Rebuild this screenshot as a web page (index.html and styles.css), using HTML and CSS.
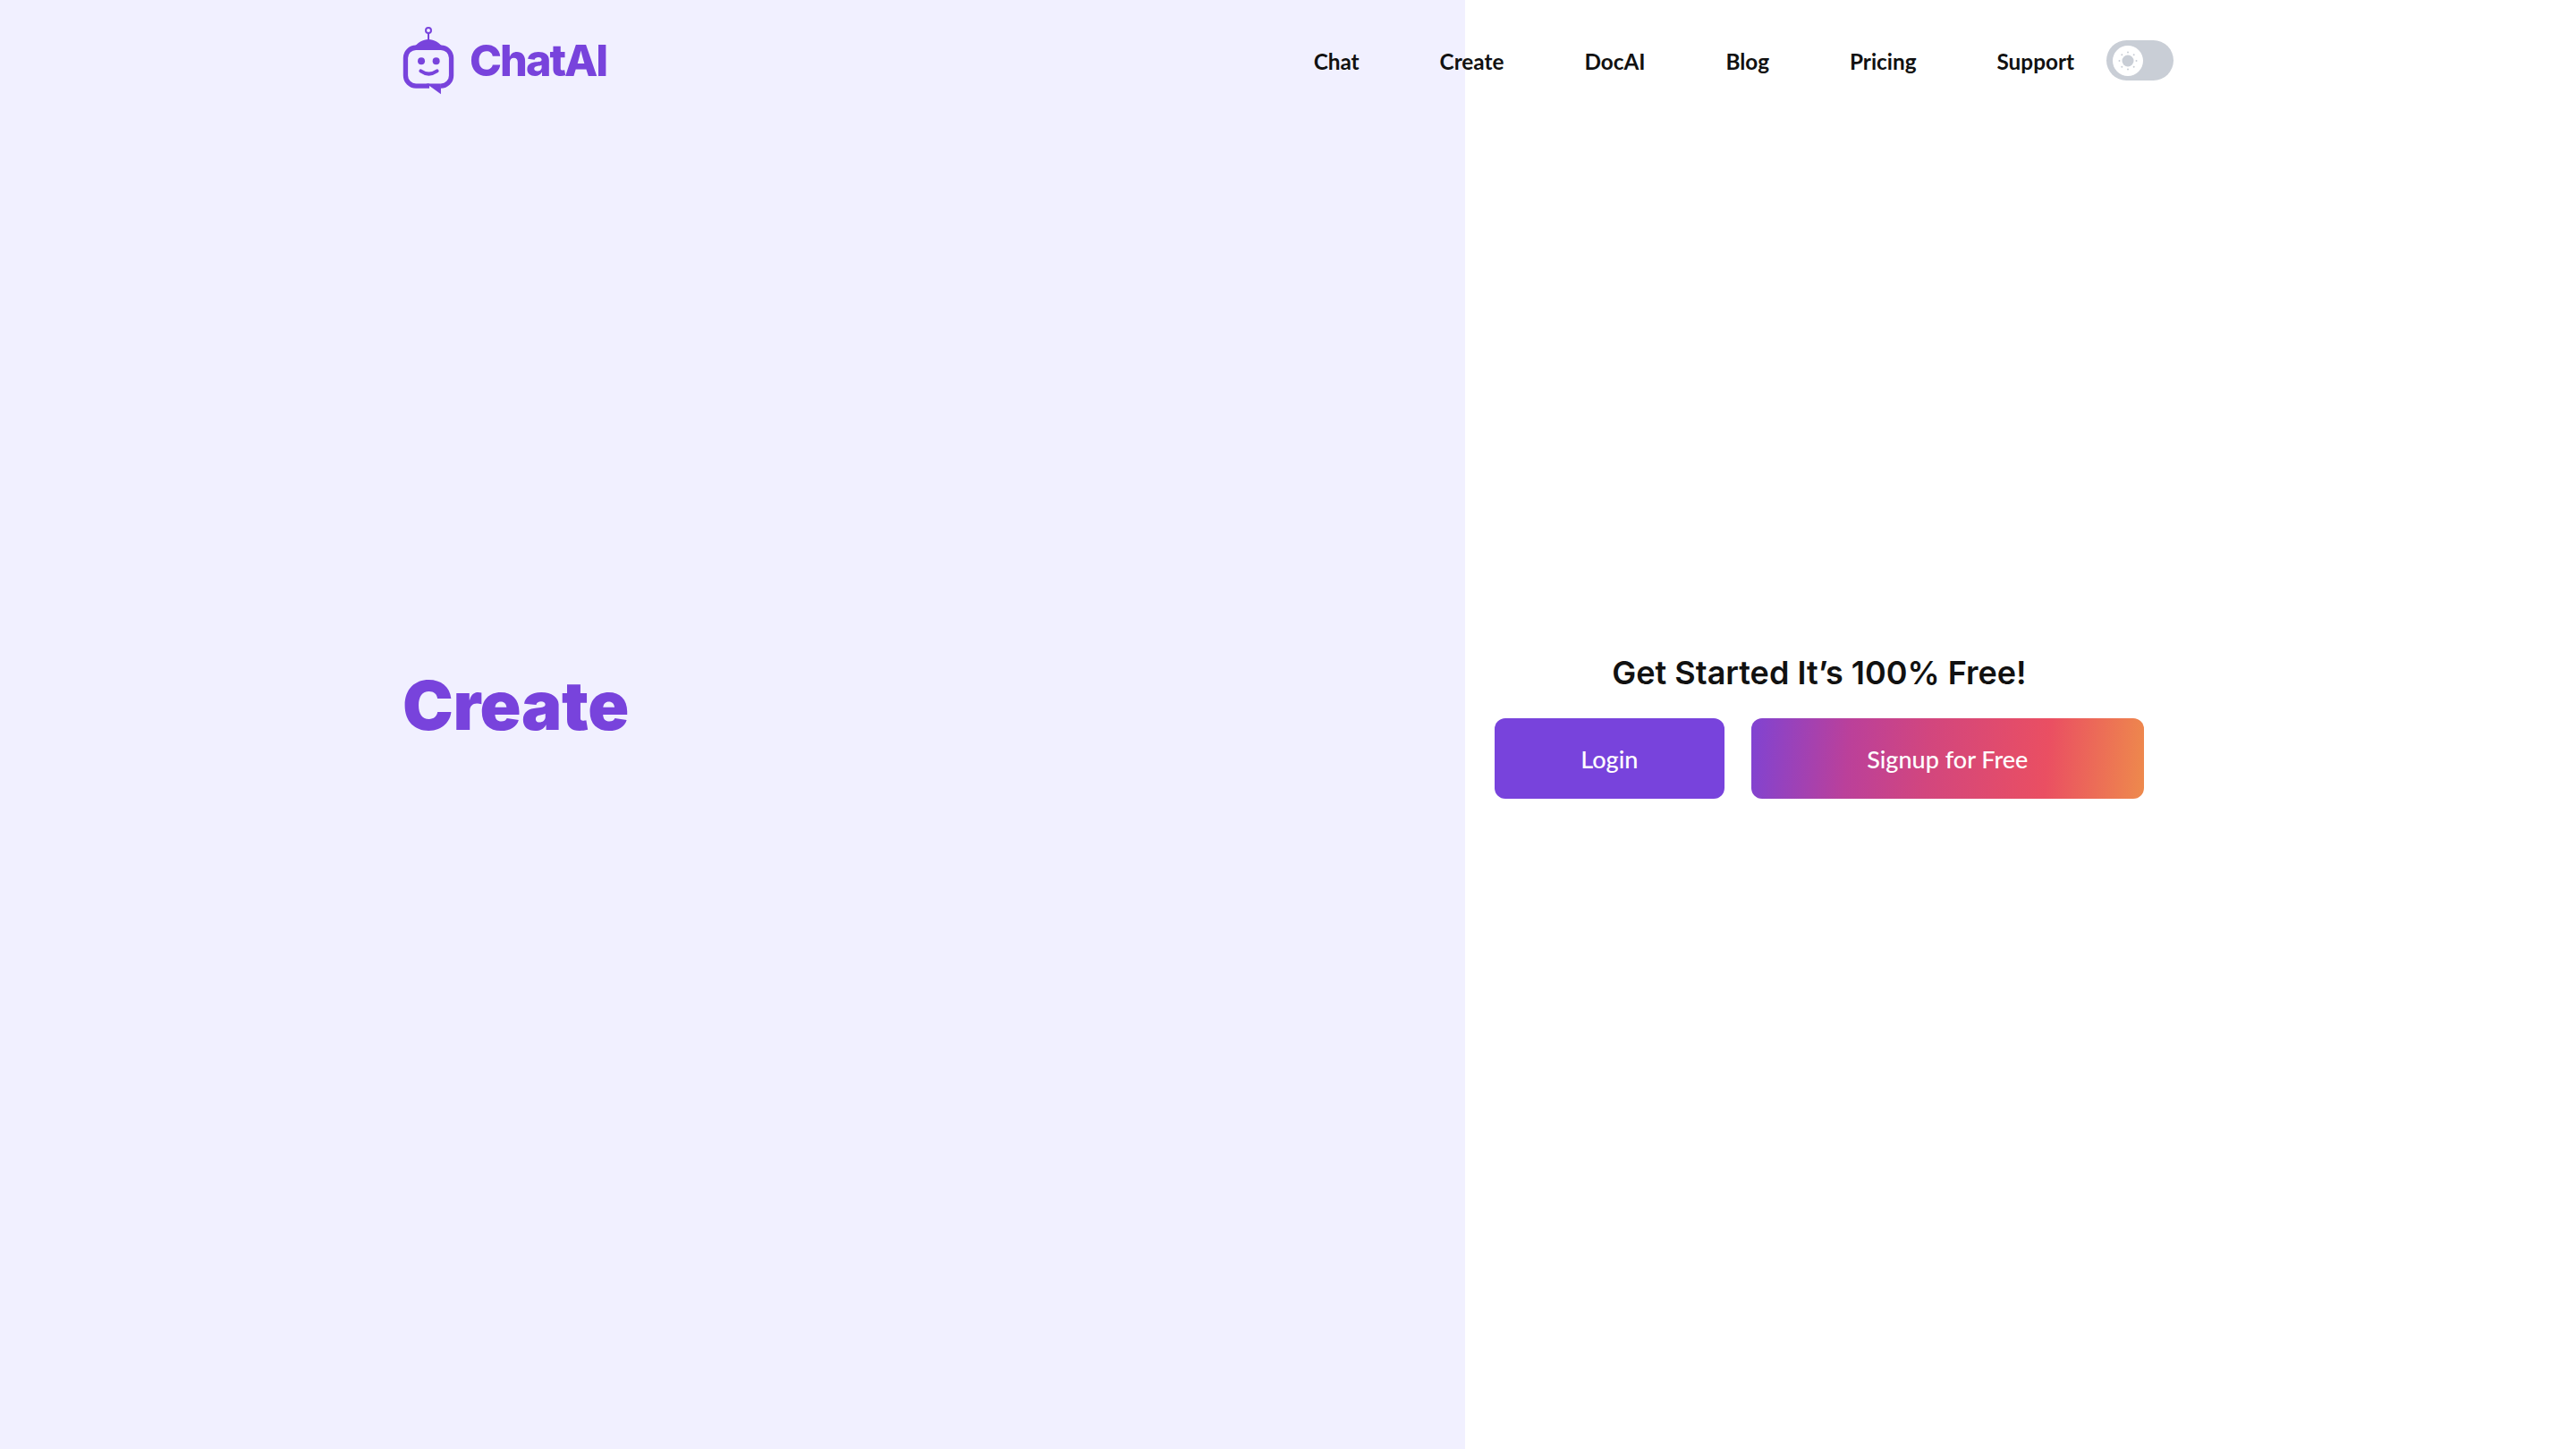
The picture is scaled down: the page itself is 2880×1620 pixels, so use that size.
FILE: index.html
```html
<!DOCTYPE html>
<html lang="en">

<head>
    <meta charset="UTF-8">
    <meta name="viewport" content="width=device-width, initial-scale=1.0">
    <title>ChatAI - Create</title>
    <link rel="stylesheet" href="styles.css">
</head>

<body>
    <!-- header sits over the two panels -->
    <header class="topbar">
        <a class="brand" href="#">
            <svg class="brand-icon" viewBox="60 55 180 235" aria-hidden="true">
                <circle cx="147" cy="70" r="9" fill="none" stroke="#7843dc" stroke-width="6"/>
                <path d="M147 78V105" stroke="#7843dc" stroke-width="6"/>
                <path d="M92 132C112 110 128 100 147 100C166 100 182 110 202 132Z" fill="#7843dc"/>
                <path d="M150 257H105a35 35 0 0 1-35-35V163a35 35 0 0 1 35-35H189a35 35 0 0 1 35 35V222a35 35 0 0 1-35 35" fill="none" stroke="#7843dc" stroke-width="16"/>
                <path d="M140 249L189 285V249Z" fill="#7843dc"/>
                <circle cx="123" cy="173" r="12" fill="#7843dc"/>
                <circle cx="173" cy="173" r="12" fill="#7843dc"/>
                <path d="M121 207Q148 226 176 207" fill="none" stroke="#7843dc" stroke-width="12" stroke-linecap="round"/>
            </svg>
            <span class="brand-name">ChatAI</span>
        </a>
        <nav class="nav">
            <a href="#">Chat</a>
            <a href="#">Create</a>
            <a href="#">DocAI</a>
            <a href="#">Blog</a>
            <a href="#">Pricing</a>
            <a href="#">Support</a>
        </nav>
        <div class="toggle">
            <span class="knob">
                <svg viewBox="0 0 34 34" width="34" height="34" aria-hidden="true">
                    <circle cx="17" cy="17" r="6.5" fill="#c9ced6"/>
                    <g fill="#c9ced6">
                        <circle cx="17" cy="7.5" r="1"/>
                        <circle cx="17" cy="26.5" r="1"/>
                        <circle cx="7.5" cy="17" r="1"/>
                        <circle cx="26.5" cy="17" r="1"/>
                        <circle cx="10.3" cy="10.3" r="1"/>
                        <circle cx="23.7" cy="10.3" r="1"/>
                        <circle cx="10.3" cy="23.7" r="1"/>
                        <circle cx="23.7" cy="23.7" r="1"/>
                    </g>
                </svg>
            </span>
        </div>
    </header>

    <main class="page">
        <section class="left">
            <h1 class="title">Create</h1>
        </section>
        <section class="right">
            <h2 class="started">Get Started It’s 100% Free!</h2>
            <div class="actions">
                <a class="btn btn-login" href="#">Login</a>
                <a class="btn btn-signup" href="#">Signup for Free</a>
            </div>
        </section>
    </main>
</body>

</html>
```

FILE: styles.css
```css
* {
    box-sizing: border-box;
}

body {
    margin: 0;
    background-color: #fff;
    font-family: "Lato", "Liberation Sans", sans-serif;
    color: #111;
}

a {
    text-decoration: none;
    color: inherit;
}

.topbar {
    position: absolute;
    top: 0;
    left: 0;
    width: 2880px;
    height: 135px;
    padding: 0 450px;
    display: flex;
    align-items: center;
}

.brand {
    display: flex;
    align-items: center;
    gap: 15px;
}

.brand-icon {
    width: 60px;
    height: 78px;
    display: block;
}

.brand-name {
    font-family: "Inter", sans-serif;
    font-size: 48.5px;
    font-weight: 800;
    letter-spacing: -2px;
    color: #7843dc;
}

.nav {
    margin-left: auto;
    padding-top: 1px;
    display: flex;
    gap: 90px;
    font-size: 24.3px;
    font-weight: 700;
}

.toggle {
    width: 75px;
    height: 45px;
    margin-left: 36px;
    border-radius: 23px;
    background-color: #c9ced6;
    display: flex;
    align-items: center;
    padding-left: 7px;
}

.knob {
    width: 34px;
    height: 34px;
    border-radius: 50%;
    background-color: #fff;
    display: block;
}

.knob svg {
    display: block;
}

.page {
    display: flex;
    height: 1620px;
}

.left {
    width: 1638px;
    padding-left: 450px;
    background-color: #f1f0ff;
    display: flex;
    align-items: center;
}

.title {
    margin: 0 0 44px;
    font-family: "Inter", sans-serif;
    font-size: 76px;
    font-weight: 900;
    letter-spacing: -0.4px;
    color: #7843dc;
}

.right {
    width: 792px;
    padding: 0 33px;
    display: flex;
    flex-direction: column;
    justify-content: center;
}

.started {
    margin: 0 0 26px;
    text-align: center;
    font-family: "Inter", sans-serif;
    font-size: 36px;
    font-weight: 600;
    line-height: 50px;
}

.actions {
    display: flex;
    gap: 30px;
}

.btn {
    height: 90px;
    border-radius: 12px;
    display: flex;
    align-items: center;
    justify-content: center;
    font-size: 27px;
    font-weight: 500;
    color: #fff;
}

.btn-login {
    width: 257px;
    background-color: #7843dc;
}

.btn-signup {
    width: 440px;
    background-image: linear-gradient(95deg, #8043d2 0%, #bb409a 25%, #d2467e 45%, #ea4f62 75%, #ee8a4c 100%);
}
```
